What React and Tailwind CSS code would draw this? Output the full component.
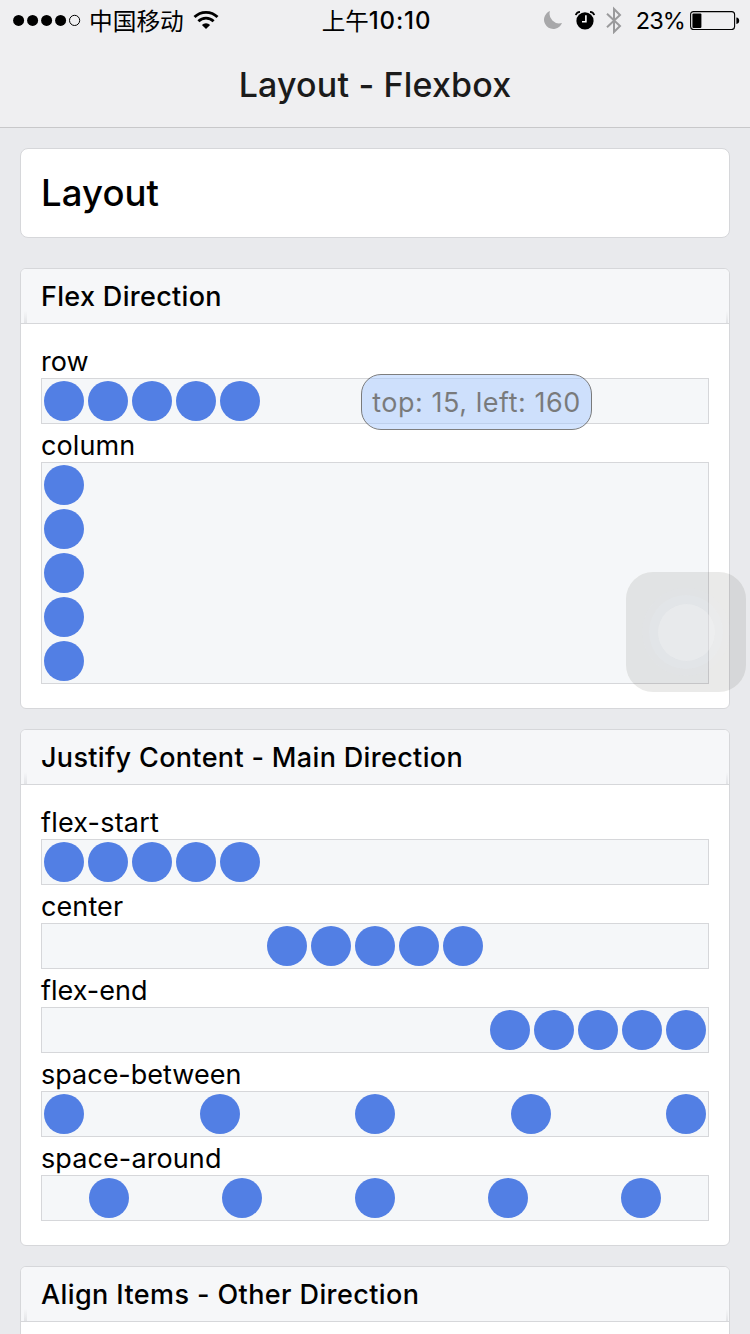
import React from "react";

function Circle() {
  return <div className="m-[2px] size-10 shrink-0 rounded-full bg-[#527fe4]" />;
}

function Track({ className }) {
  return (
    <div className={"flex border border-[#d6d7da] bg-[#f5f7f9] " + className}>
      {[0, 1, 2, 3, 4].map((i) => (
        <Circle key={i} />
      ))}
    </div>
  );
}

function Label({ children, className = "tracking-[0.1px]" }) {
  return (
    <div className={"flex h-[38px] items-center whitespace-nowrap pt-[6px] text-[27px] leading-[32px] text-black " + className}>
      <span>{children}</span>
    </div>
  );
}

function Block({ title, titleClass, className, children }) {
  return (
    <section className={"shrink-0 overflow-hidden rounded-[6px] border border-[#d6d7da] bg-white " + className}>
      <h2 className="flex h-[55px] flex-col justify-between border-b border-[#d6d7da] bg-[#f6f7f9]">
        <span className={"whitespace-nowrap pl-5 pt-[2px] text-[27px] font-medium leading-[52px] text-black " + titleClass}>
          {title}
        </span>
        <span className="-mt-3 flex h-3 justify-between px-[3px]">
          <span className="h-full w-[3px] bg-gradient-to-b from-transparent to-[#e3e4e7]" />
          <span className="-mr-[2px] h-full w-[2px] bg-gradient-to-b from-transparent to-[#e3e4e7]" />
        </span>
      </h2>
      <div className="px-5 pt-4">{children}</div>
    </section>
  );
}

function StatusBar() {
  return (
    <div className="flex h-10 items-center justify-between pl-[13px] pr-[10px] text-black">
      <div className="flex w-[300px] items-center">
        <svg width="68" height="12" viewBox="0 0 68 12">
          <circle cx="5.6" cy="6.4" r="5.5" />
          <circle cx="19.6" cy="6.4" r="5.5" />
          <circle cx="33.6" cy="6.4" r="5.5" />
          <circle cx="47.6" cy="6.4" r="5.5" />
          <circle cx="61.6" cy="6.4" r="5.1" fill="none" stroke="#000" strokeWidth="1" />
        </svg>
        <span className="ml-[8px] whitespace-nowrap font-['Noto_Sans_CJK_SC',sans-serif] text-[23.7px] leading-[40px]">中国移动</span>
        <svg className="ml-[9px]" width="26" height="20" viewBox="0 0 26 20">
          <g fill="none" stroke="#000" strokeWidth="2.8">
            <path d="M1.5 7.1a16.3 16.3 0 0 1 23 0" />
            <path d="M5.4 11.2a10.8 10.8 0 0 1 15.2 0" />
          </g>
          <path d="M13 19l-4.1-4.1a5.8 5.8 0 0 1 8.2 0z" />
        </svg>
      </div>
      <div className="flex items-center whitespace-nowrap pt-[2px] leading-[38px]">
        <span className="-mt-[3px] font-['Noto_Sans_CJK_SC',sans-serif] text-[23.5px]">上午</span>
        <span className="text-[24px] font-medium tracking-[0.9px]">10:10</span>
      </div>
      <div className="flex w-[300px] items-center justify-end">
        <svg width="20" height="20" viewBox="0 0 20 20">
          <path d="M7 1A9.3 9.3 0 1 0 19 13 9.6 9.6 0 0 1 7 1z" fill="#a8a8aa" />
        </svg>
        <svg className="ml-[12px]" width="20" height="20" viewBox="0 0 20 20">
          <circle cx="10" cy="10.9" r="8.6" />
          <path d="M.8 5.1Q1.6 2.1 5 1.9M19.2 5.1Q18.4 2.1 15 1.9" fill="none" stroke="#000" strokeWidth="1.7" />
          <path d="M10.9 5.3v6.5H7" fill="none" stroke="#fff" strokeWidth="1.6" />
        </svg>
        <svg className="ml-[11px]" width="16" height="28" viewBox="0 0 16 28">
          <path d="M1 7.8l13 12.2-6 6V3l6 6L1 21.2" fill="none" stroke="#9a9a9c" strokeWidth="2" />
        </svg>
        <span className="ml-[14px] whitespace-nowrap pt-[2px] text-[23.5px] leading-[38px] tracking-[-0.9px]">23%</span>
        <svg className="ml-[5px]" width="50" height="20" viewBox="0 0 50 20">
          <rect x=".6" y="1.6" width="44" height="18" rx="3" fill="none" stroke="#000" strokeWidth="1.1" />
          <rect x="2.4" y="3.5" width="9" height="14.4" rx="1" />
          <path d="M46.4 7.5q2.8.4 2.8 3.2t-2.8 3.2z" />
        </svg>
      </div>
    </div>
  );
}

function AssistiveButton() {
  return (
    <div className="absolute left-[626px] top-[572px] flex size-[120px] items-center justify-center rounded-[27px] bg-[#0a0600]/[0.085]">
      <div className="flex size-[88px] items-center justify-center rounded-full bg-[#eef5fc]/5">
        <div className="flex size-[74px] items-center justify-center rounded-full bg-[#f2f6fb]/12">
          <div className="flex size-[59px] items-center justify-center rounded-full bg-black/[0.005]">
            <div className="size-[57px] rounded-full bg-[#f8f8fa]/30" />
          </div>
        </div>
      </div>
    </div>
  );
}

export default function App() {
  return (
    <div className="relative flex h-[1334px] w-[750px] flex-col overflow-hidden bg-[#e9eaed] font-['Inter',sans-serif]">
      <header className="h-[128px] shrink-0 border-b border-[#c8c8ca] bg-[#efeff1]">
        <StatusBar />
        <h1 className="pt-[20px] text-center text-[34px] font-medium leading-[50px] tracking-[0.17px] text-[#1b1b1b]">Layout - Flexbox</h1>
      </header>

      <main className="flex flex-col px-5 pt-5">
        <div className="flex h-[90px] shrink-0 items-center rounded-[8px] border border-[#d6d7da] bg-white pl-5">
          <span className="text-[36.5px] font-medium tracking-[0.1px] text-black">Layout</span>
        </div>

        <Block title="Flex Direction" className="mt-[30px] h-[441px]" titleClass="tracking-[0.32px]">
          <Label className="tracking-normal">row</Label>
          <div className="relative">
            <Track className="flex-row" />
            <div className="absolute -top-1 left-[320px] flex h-14 w-[231px] items-center justify-center whitespace-nowrap rounded-[20px] border border-black bg-[#a8caff] pt-[2px] text-[27px] tracking-[0.54px] text-black opacity-50">
              <span>top: 15, left: 160</span>
            </div>
          </div>
          <Label>column</Label>
          <Track className="flex-col" />
        </Block>

        <Block title="Justify Content - Main Direction" className="mt-5 h-[517px]" titleClass="tracking-[0.34px]">
          <Label className="tracking-[0.2px]">flex-start</Label>
          <Track className="justify-start" />
          <Label>center</Label>
          <Track className="justify-center" />
          <Label className="tracking-normal">flex-end</Label>
          <Track className="justify-end" />
          <Label className="tracking-normal">space-between</Label>
          <Track className="justify-between" />
          <Label>space-around</Label>
          <Track className="justify-around" />
        </Block>

        <Block title="Align Items - Other Direction" className="mt-5 h-[441px]" titleClass="tracking-[0.4px]" />
      </main>

      <AssistiveButton />
    </div>
  );
}
